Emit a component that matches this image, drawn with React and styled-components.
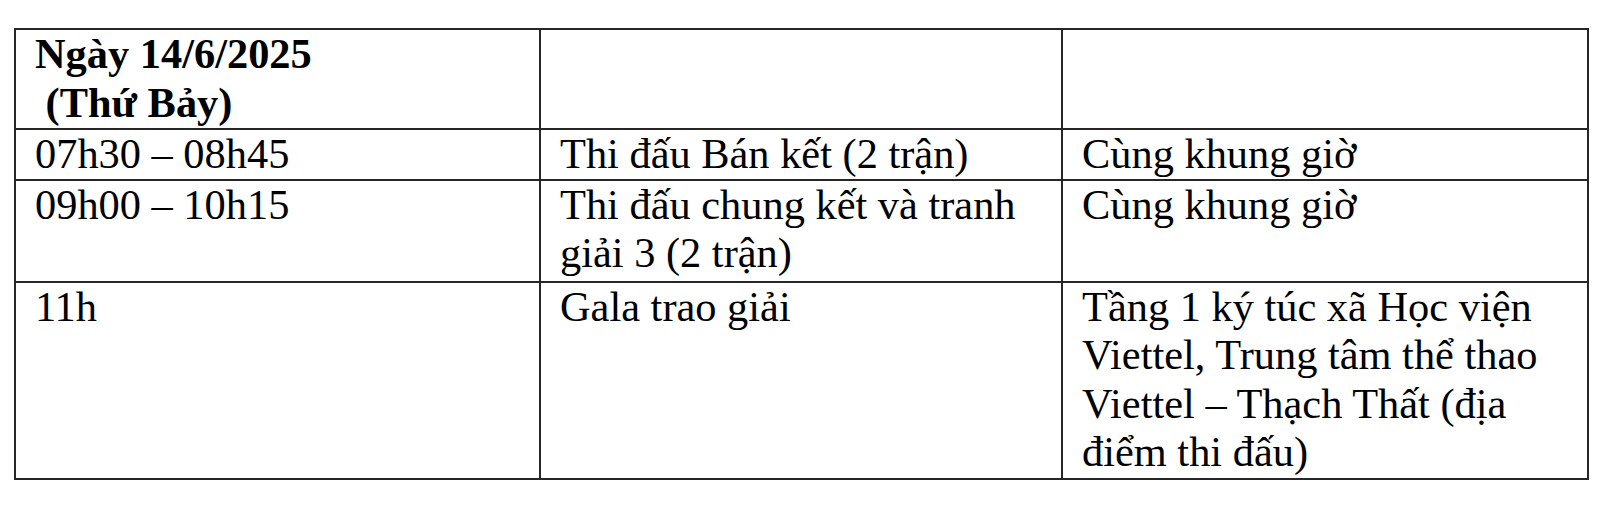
import styled, { createGlobalStyle } from "styled-components";

const GlobalStyle = createGlobalStyle`
  body {
    margin: 0;
    background: #ffffff;
  }
`;

const Page = styled.div`
  padding: 28px 0 0 14px;
`;

const Table = styled.table`
  width: 1573px;
  border-collapse: collapse;
  table-layout: fixed;
  font-family: "Liberation Serif", "Times New Roman", Times, serif;
  font-size: 42.4px;
  line-height: 48.5px;
  color: #000;
`;

const Col = styled.col`
  width: ${({ $w }) => $w}px;
`;

const Row = styled.tr`
  height: ${({ $h }) => $h}px;
`;

const Cell = styled.td`
  border: 2px solid #262626;
  padding: 0 19px;
  vertical-align: top;
  font-weight: ${({ $bold }) => ($bold ? 700 : 400)};
  white-space: pre-wrap;
`;

const rows = [
  { time: "07h30 – 08h45", what: "Thi đấu Bán kết (2 trận)", where: "Cùng khung giờ", h: 48 },
  { time: "09h00 – 10h15", what: "Thi đấu chung kết và tranh giải 3 (2 trận)", where: "Cùng khung giờ", h: 102 },
  {
    time: "11h",
    what: "Gala trao giải",
    where: "Tầng 1 ký túc xã Học viện Viettel, Trung tâm thể thao Viettel – Thạch Thất (địa điểm thi đấu)",
    h: 197,
  },
];

const App = () => {
  return (
    <>
      <GlobalStyle />
      <Page>
        <Table>
          <colgroup>
            <Col $w={525} />
            <Col $w={522} />
            <Col $w={526} />
          </colgroup>
          <tbody>
            <Row $h={100}>
              <Cell $bold>
                Ngày 14/6/2025
                <br />
                {" (Thứ Bảy)"}
              </Cell>
              <Cell />
              <Cell />
            </Row>
            {rows.map(({ time, what, where, h }) => (
              <Row $h={h} key={time}>
                <Cell>{time}</Cell>
                <Cell>{what}</Cell>
                <Cell>{where}</Cell>
              </Row>
            ))}
          </tbody>
        </Table>
      </Page>
    </>
  );
};

export default App;
